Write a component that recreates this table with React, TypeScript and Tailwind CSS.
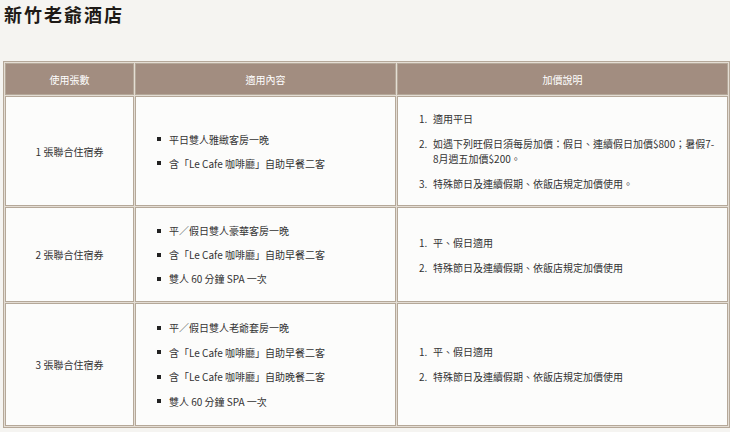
import React from 'react';

type Row = {
  label: string;
  items: string[];
  notes: string[][];
};

const ROWS: Row[] = [
  {
    label: '1 張聯合住宿券',
    items: ['平日雙人雅緻客房一晚', '含「Le Cafe 咖啡廳」自助早餐二客'],
    notes: [
      ['適用平日'],
      ['如遇下列旺假日須每房加價：假日、連續假日加價$800；暑假7-', '8月週五加價$200。'],
      ['特殊節日及連續假期、依飯店規定加價使用。'],
    ],
  },
  {
    label: '2 張聯合住宿券',
    items: ['平／假日雙人豪華客房一晚', '含「Le Cafe 咖啡廳」自助早餐二客', '雙人 60 分鐘 SPA 一次'],
    notes: [['平、假日適用'], ['特殊節日及連續假期、依飯店規定加價使用']],
  },
  {
    label: '3 張聯合住宿券',
    items: [
      '平／假日雙人老爺套房一晚',
      '含「Le Cafe 咖啡廳」自助早餐二客',
      '含「Le Cafe 咖啡廳」自助晚餐二客',
      '雙人 60 分鐘 SPA 一次',
    ],
    notes: [['平、假日適用'], ['特殊節日及連續假期、依飯店規定加價使用']],
  },
];

const cell = 'border border-[#b5a899] bg-[#fcfcfb] align-middle';

export default function App() {
  return (
    <div className="min-h-[432px] w-[730px] overflow-hidden bg-[#f5f4f1] font-['Noto_Sans_CJK_TC',sans-serif] text-[#333]">
      <h1 className="pl-[4px] pt-[3px] h-[61px] font-['Liberation_Serif','Noto_Sans_CJK_TC',serif] text-[18px] font-bold tracking-[2px] leading-[26px] text-[#1e1a16]">
        新竹老爺酒店
      </h1>

      <table className="ml-[3px] w-[727px] table-fixed border-separate border-spacing-[1px] border border-[#b5a899] bg-[#e4ddd4] text-[10px] leading-[15px]">
        <colgroup>
          <col className="w-[129px]" />
          <col className="w-[261px]" />
          <col />
        </colgroup>
        <thead>
          <tr className="h-[32px]">
            {['使用張數', '適用內容', '加價說明'].map((h) => (
              <th key={h} className="border border-[#b5a899] bg-[#a28d80] text-center font-normal text-white">
                {h}
              </th>
            ))}
          </tr>
        </thead>
        <tbody>
          {ROWS.map((r, ri) => (
            <tr key={r.label}>
              <td className={`${cell} text-center`}>{r.label}</td>

              <td className={`${cell} ${ri === 2 ? 'py-[16px]' : 'py-[15px]'} pl-[21px]`}>
                <ul className={`flex flex-col ${ri === 2 ? 'gap-[9.5px]' : 'gap-[9px]'}`}>
                  {r.items.map((it) => (
                    <li key={it} className="flex items-center">
                      <span className="mr-[8px] h-[4px] w-[4px] shrink-0 bg-[#222]" />
                      {it}
                    </li>
                  ))}
                </ul>
              </td>

              <td className={`${cell} py-[14px] pl-[21px] pr-[4px]`}>
                <ol className="flex flex-col gap-[10px]">
                  {r.notes.map((lines, i) => (
                    <li key={i} className="flex">
                      <span className="w-[14px] shrink-0">{i + 1}.</span>
                      <div>
                        {lines.map((l) => (
                          <div key={l} className="whitespace-nowrap">{l}</div>
                        ))}
                      </div>
                    </li>
                  ))}
                </ol>
              </td>
            </tr>
          ))}
        </tbody>
      </table>
    </div>
  );
}
